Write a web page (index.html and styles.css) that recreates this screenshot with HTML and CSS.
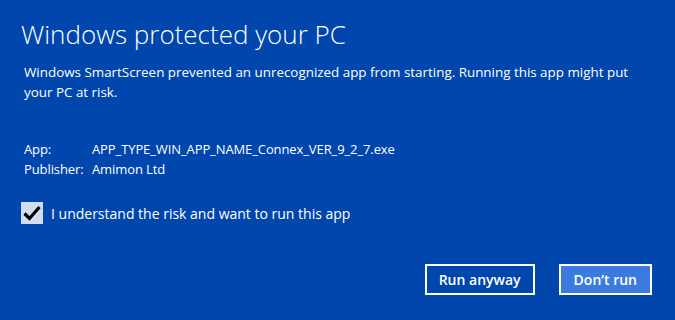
FILE: index.html
```html
<!DOCTYPE html>
<html lang="en">
<head>
  <meta charset="UTF-8">
  <meta name="viewport" content="width=device-width, initial-scale=1.0">
  <title>Windows protected your PC</title>
  <link rel="stylesheet" href="styles.css">
</head>
<body>
  <div class="dialog">
    <h1 class="title">Windows protected your PC</h1>
    <p class="message">Windows SmartScreen prevented an unrecognized app from starting. Running this app might put your PC at risk.</p>

    <div class="details">
      <div class="detail-row">
        <span class="detail-label">App:</span>
        <span class="detail-value">APP_TYPE_WIN_APP_NAME_Connex_VER_9_2_7.exe</span>
      </div>
      <div class="detail-row">
        <span class="detail-label">Publisher:</span>
        <span class="detail-value">Amimon Ltd</span>
      </div>
    </div>

    <label class="risk-check">
      <span class="check-box">
        <svg width="18" height="16" viewBox="0 0 18 16">
          <path d="M1.5 8.5 L6.5 13.5 L16.5 2" fill="none" stroke="#000" stroke-width="3.2"/>
        </svg>
      </span>
      <span>I understand the risk and want to run this app</span>
    </label>

    <div class="buttons">
      <button class="btn">Run anyway</button>
      <button class="btn btn-primary">Don’t run</button>
    </div>
  </div>
</body>
</html>
```

FILE: styles.css
```css
body {
  margin: 0;
  padding: 0;
  background-color: #0046ad;
  color: #fff;
  font-family: "Open Sans", "Noto Sans", sans-serif;
}

.dialog {
  width: 675px;
  height: 320px;
  padding: 16px 22px 0 23px;
  box-sizing: border-box;
}

.title {
  margin: 0 0 0 -2px;
  font-size: 26px;
  font-weight: 300;
  line-height: 36px;
}

.message {
  margin: 10px 0 0 1px;
  font-size: 13.4px;
  line-height: 20px;
  width: 612px;
}

.details {
  margin: 37px 0 0 1px;
  font-size: 13px;
  letter-spacing: -0.1px;
  line-height: 20px;
}

.detail-row {
  display: flex;
}

.detail-label {
  width: 68px;
}

.risk-check {
  display: flex;
  align-items: center;
  gap: 8px;
  margin-top: 23px;
  margin-left: -2px;
  font-size: 14px;
}

.check-box {
  width: 22px;
  height: 22px;
  background-color: #d2ddf2;
  display: flex;
  align-items: center;
  justify-content: center;
}

.buttons {
  display: flex;
  justify-content: flex-end;
  gap: 24px;
  margin-top: 40px;
  margin-right: 1px;
}

.btn {
  height: 31px;
  padding: 0 12px;
  border: 2px solid #fff;
  background-color: #0046ad;
  color: #fff;
  font-family: "Open Sans", "Noto Sans", sans-serif;
  font-size: 14px;
  font-weight: 600;
}

.btn-primary {
  background-color: #3b7be0;
  padding: 0 13px;
}
```
